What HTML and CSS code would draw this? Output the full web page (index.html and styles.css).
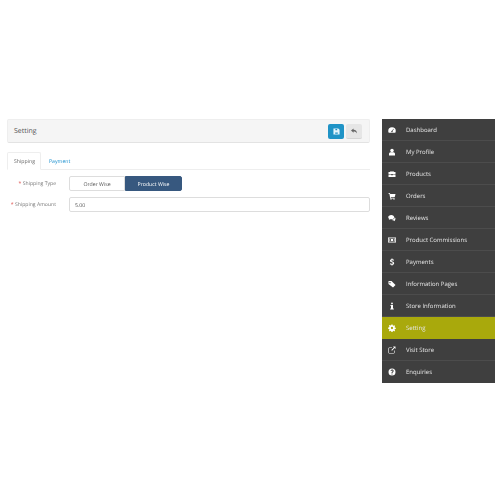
FILE: index.html
```html
<!DOCTYPE html>
<html>
<head>
    <meta charset="utf-8">
    <title>Setting</title>
    <link rel="stylesheet" href="styles.css">
</head>
<body>
    <div class="page">
        <div class="content">
            <div class="heading">
                <span class="title">Setting</span>
                <div class="actions">
                    <button class="btn btn-save">
                        <svg width="7" height="7" viewBox="0 0 16 16"><path fill="#e4f4fb" fill-rule="evenodd" d="M1 1h11l3 3v11H1zM5.500 2v3h4V2zM5 10.500v2.500h6v-2.500z"/></svg>
                    </button>
                    <button class="btn btn-back">
                        <svg width="8" height="6" viewBox="0 0 16 14"><path fill="#666" d="M7 1v3c5 0 8 3 8 9-2-4-4-5-8-5v3L1 6z"/></svg>
                    </button>
                </div>
            </div>

            <div class="tabs">
                <span class="tab active">Shipping</span>
                <span class="tab">Payment</span>
            </div>

            <div class="row">
                <label class="label"><span class="req">*</span> Shipping Type</label>
                <div class="toggle">
                    <span class="opt">Order Wise</span>
                    <span class="opt on">Product Wise</span>
                </div>
            </div>
            <div class="row">
                <label class="label"><span class="req">*</span> Shipping Amount</label>
                <div class="input">5.00</div>
            </div>
        </div>

        <ul class="menu">
            <li><svg viewBox="0 0 16 16"><path d="M8 2.500a7.500 7.500 0 0 0-7.500 7.500c0 1.500.4 2.700 1 3.500h13c.6-.8 1-2 1-3.500A7.500 7.500 0 0 0 8 2.500zM8 9.500l3-4 .7.5-2.500 4.200A1.500 1.500 0 1 1 8 9.500z" fill-rule="evenodd"/></svg>Dashboard</li>
            <li><svg viewBox="0 0 16 16"><circle cx="8" cy="5" r="3.500"/><path d="M2 15v-3c0-2 1.500-3.500 3-3.500h6c1.500 0 3 1.500 3 3.500v3z"/></svg>My Profile</li>
            <li><svg viewBox="0 0 16 16"><path d="M5 2h6v2h4v4H1V4h4zM6.200 3.200V4h3.600v-.8zM1 9h5.500v1.500h3V9H15v5H1z" fill-rule="evenodd"/></svg>Products</li>
            <li><svg viewBox="0 0 16 16"><path d="M1 2h3l.4 2H15l-1.500 6H5.500l.3 1.500H13V13H4.500L2.800 3.500H1z"/><circle cx="6" cy="14" r="1.300"/><circle cx="12" cy="14" r="1.300"/></svg>Orders</li>
            <li><svg viewBox="0 0 16 16"><path d="M6.500 2C3 2 .5 4 .5 6.500c0 1.400.8 2.600 2 3.400L1.500 12l3-1.500c.6.1 1.300.2 2 .2 3.500 0 6-1.900 6-4.200S10 2 6.500 2z"/><path d="M13.500 6.500c0 3-2.800 5-6 5.200 1 .9 2.300 1.300 3.700 1.300l3 1.500-.7-2.200c1-.7 1.500-1.700 1.500-2.800 0-1.200-.6-2.200-1.500-3z"/></svg>Reviews</li>
            <li><svg viewBox="0 0 16 16"><path d="M0 3h16v10H0zM1.500 4.500v7h13v-7zM2.500 5.500h2v1h-1v3h1v1h-2zM11.500 5.500h2v5h-2v-1h1v-3h-1z" fill-rule="evenodd"/><circle cx="8" cy="8" r="2.500"/></svg>Product Commissions</li>
            <li><svg viewBox="0 0 16 16"><path d="M7 1h2v1.600c1.300.1 2.400.5 3 .9l-.7 1.900c-.8-.4-1.900-.8-3.100-.8-1 0-1.500.4-1.500 1 0 .7.700 1 2.200 1.500 2.200.7 3.400 1.600 3.400 3.300 0 1.600-1.200 2.900-3.300 3.200V15H7v-1.500c-1.400-.1-2.700-.5-3.500-1l.7-2c.9.5 2.200 1 3.500 1 1.100 0 1.800-.5 1.800-1.200s-.6-1.100-2-1.600c-2-.7-3.500-1.500-3.500-3.300 0-1.600 1.100-2.800 3-3.100z"/></svg>Payments</li>
            <li><svg viewBox="0 0 16 16"><path d="M1 2h6l8 8-5 5-9-7zM4 4a1.300 1.300 0 1 0 0 2.600A1.300 1.300 0 0 0 4 4z" fill-rule="evenodd"/></svg>Information Pages</li>
            <li><svg viewBox="0 0 16 16"><circle cx="8" cy="2.800" r="1.800"/><path d="M5 6h5v7h1.500v2h-7v-2H6V8H5z"/></svg>Store Information</li>
            <li class="active"><svg viewBox="0 0 16 16"><path d="M6.800 1h2.400l.4 2 1.200.5 1.700-1.100 1.700 1.700-1.100 1.700.5 1.200 2 .4v2.400l-2 .4-.5 1.200 1.100 1.700-1.700 1.700-1.700-1.100-1.200.5-.4 2H6.800l-.4-2-1.200-.5-1.700 1.100-1.700-1.700 1.100-1.700-.5-1.200-2-.4V6.800l2-.4.5-1.200-1.100-1.700 1.700-1.700 1.700 1.100 1.200-.5zM8 5.700a2.300 2.300 0 1 0 0 4.600 2.300 2.300 0 0 0 0-4.600z" fill-rule="evenodd"/></svg>Setting</li>
            <li><svg viewBox="0 0 16 16"><path d="M10 1h5v5l-1.800-1.800L8 9.400 6.600 8l5.200-5.200z"/><path d="M12 9v4a1 1 0 0 1-1 1H3a1 1 0 0 1-1-1V5a1 1 0 0 1 1-1h5V2.800H3A2.200 2.200 0 0 0 .8 5v8A2.200 2.200 0 0 0 3 15.200h8a2.200 2.200 0 0 0 2.200-2.200V9z"/></svg>Visit Store</li>
            <li><svg viewBox="0 0 16 16"><path d="M8 1a7 7 0 1 0 0 14A7 7 0 0 0 8 1zM7 11h2v2H7zM9 10H7c0-2.500 2.200-2.500 2.200-4 0-.7-.5-1-1.200-1s-1.200.4-1.500 1.200L5 5.500C5.500 4 6.500 3.200 8.200 3.200c1.800 0 3 1 3 2.600C11.200 8 9 8.200 9 10z" fill-rule="evenodd"/></svg>Enquiries</li>
        </ul>
    </div>
</body>
</html>
```

FILE: styles.css
```css
body {
    margin: 0;
    background: #fff;
    font-family: "Open Sans", sans-serif;
    font-size: 5.2px;
    color: #666;
    text-rendering: geometricPrecision;
}

/* The reference is a scaled-down screenshot, everything in it is a little soft */
.page {
    display: flex;
    align-items: flex-start;
    padding: 119px 5px 0 7px;
    filter: blur(0.3px);
}

.content {
    width: 363px;
}

.menu {
    margin: 0 0 0 12px;
    padding: 0;
    width: 113px;
    list-style: none;
    background: #3f3f3f;
}

.menu li {
    display: flex;
    align-items: center;
    height: 21px;
    padding-left: 6px;
    border-bottom: 1px solid #4c4c4c;
    color: #e6e6e6;
    font-size: 6px;
}

.menu li:last-child {
    border-bottom: 0;
    height: 22px;
}

.menu li.active {
    background: #a9a90c;
    border-bottom-color: #a9a90c;
}

.menu svg {
    width: 8px;
    height: 8px;
    margin-right: 10px;
    fill: #fff;
    flex: none;
}

.heading {
    display: flex;
    align-items: center;
    justify-content: space-between;
    box-sizing: border-box;
    height: 24px;
    padding: 0 7px 0 6px;
    background: #f5f5f5;
    border: 1px solid #eee;
    border-bottom: 1px solid #e3e3e3;
    border-radius: 2px;
}

.title {
    font-size: 7px;
    color: #555;
}

.actions {
    display: flex;
    gap: 2px;
}

.btn {
    display: flex;
    align-items: center;
    justify-content: center;
    width: 16px;
    height: 15px;
    padding: 0;
    border: 0;
    border-radius: 2px;
}

.btn-save {
    background: #1f93c6;
}

.btn-back {
    background: #e6e6e6;
    border-bottom: 1px solid #d5d5d5;
}

.tabs {
    display: flex;
    margin-top: 9px;
    height: 17px;
    border-bottom: 1px solid #eee;
}

.tab {
    display: flex;
    align-items: center;
    box-sizing: border-box;
    width: 34px;
    height: 18px;
    padding-left: 6px;
    color: #1e91cf;
}

.tab + .tab {
    margin-left: 2px;
}

.tab.active {
    color: #666;
    background: #fff;
    border: 1px solid #eee;
    border-bottom-color: #fff;
    border-radius: 2px 2px 0 0;
}

.row {
    display: flex;
    align-items: center;
    margin-top: 6px;
}

.label {
    width: 49px;
    text-align: right;
    white-space: nowrap;
    margin-right: 13px;
    color: #777;
    font-size: 5.1px;
}

.req {
    color: #d9302c;
}

.toggle {
    display: flex;
    height: 15px;
}

.opt {
    display: flex;
    align-items: center;
    justify-content: center;
    box-sizing: border-box;
    width: 56px;
    border: 1px solid #ddd;
    border-radius: 2px 0 0 2px;
    color: #555;
}

.opt.on {
    width: 57px;
    background: #37587f;
    border-color: #37587f;
    border-radius: 0 2px 2px 0;
    color: #fff;
}

.input {
    display: flex;
    align-items: center;
    box-sizing: border-box;
    width: 301px;
    height: 15px;
    padding: 0 5px;
    border: 1px solid #ddd;
    border-radius: 2px;
    color: #555;
}
```
